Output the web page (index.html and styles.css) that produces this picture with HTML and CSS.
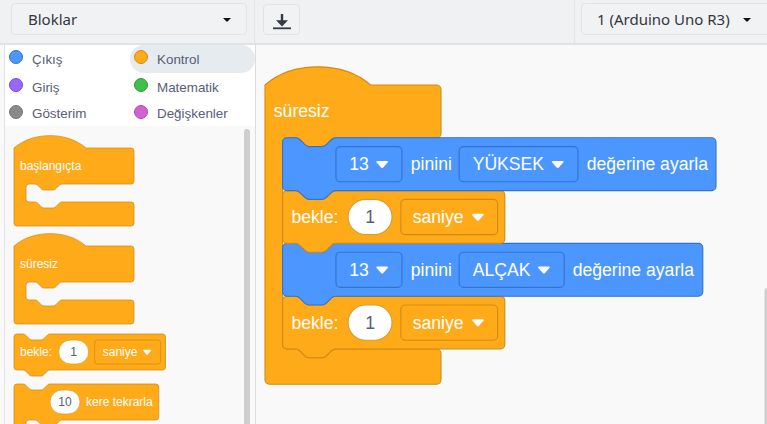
FILE: index.html
```html
<!DOCTYPE html>
<html lang="tr">
<head>
<meta charset="utf-8">
<title>Bloklar</title>
<link rel="stylesheet" href="styles.css">
</head>
<body>
<header class="topbar">
  <div class="tb-left">
    <div class="select"><span>Bloklar</span><span class="caret"></span></div>
  </div>
  <div class="tb-mid">
    <button class="icon-btn" type="button" aria-label="İndir">
      <svg width="18" height="16" viewBox="0 0 18 16"><rect x="7.8" y="0" width="2.4" height="7" fill="#343a46"/><polygon points="3,6.2 15,6.2 9,12.4" fill="#343a46"/><rect x="0" y="13.4" width="18" height="1.8" fill="#343a46"/></svg>
    </button>
  </div>
  <div class="tb-right">
    <div class="select board"><span>1 (Arduino Uno R3)</span><span class="caret"></span></div>
  </div>
</header>
<main class="main">
  <aside class="sidebar">
    <div class="side-inner">
      <ul class="cats">
        <li class="cat"><span class="dot d-blue"></span>Çıkış</li>
        <li class="cat active"><span class="dot d-orange"></span>Kontrol</li>
        <li class="cat"><span class="dot d-purple"></span>Giriş</li>
        <li class="cat"><span class="dot d-green"></span>Matematik</li>
        <li class="cat"><span class="dot d-gray"></span>Gösterim</li>
        <li class="cat"><span class="dot d-pink"></span>Değişkenler</li>
      </ul>
      <div class="flyout">
        <svg class="canvas" width="250" height="299" viewBox="5 125 250 299">
          <g transform="translate(14,147) scale(0.75)">
            <path class="ctl" d="M 0,0 c 25,-22 71,-22 96,0 H 156 a 4,4 0 0 1 4,4 V 44 a 4,4 0 0 1 -4,4 H 64 c -2,0 -3,1 -4,2 l -4,4 c -1,1 -2,2 -4,2 h -12 c -2,0 -3,-1 -4,-2 l -4,-4 c -1,-1 -2,-2 -4,-2 H 20 a 4,4 0 0 0 -4,4 V 68 a 4,4 0 0 0 4,4 H 28 c 2,0 3,1 4,2 l 4,4 c 1,1 2,2 4,2 h 12 c 2,0 3,-1 4,-2 l 4,-4 c 1,-1 2,-2 4,-2 H 156 a 4,4 0 0 1 4,4 V 100 a 4,4 0 0 1 -4,4 H 4 a 4,4 0 0 1 -4,-4 Z"/>
            <text class="bt" x="8" y="24">başlangıçta</text>
          </g>
          <g transform="translate(14,245) scale(0.75)">
            <path class="ctl" d="M 0,0 c 25,-22 71,-22 96,0 H 156 a 4,4 0 0 1 4,4 V 44 a 4,4 0 0 1 -4,4 H 64 c -2,0 -3,1 -4,2 l -4,4 c -1,1 -2,2 -4,2 h -12 c -2,0 -3,-1 -4,-2 l -4,-4 c -1,-1 -2,-2 -4,-2 H 20 a 4,4 0 0 0 -4,4 V 68 a 4,4 0 0 0 4,4 H 28 c 2,0 3,1 4,2 l 4,4 c 1,1 2,2 4,2 h 12 c 2,0 3,-1 4,-2 l 4,-4 c 1,-1 2,-2 4,-2 H 156 a 4,4 0 0 1 4,4 V 100 a 4,4 0 0 1 -4,4 H 4 a 4,4 0 0 1 -4,-4 Z"/>
            <text class="bt" x="8" y="24">süresiz</text>
          </g>
          <g transform="translate(14,333) scale(0.75)">
            <path class="ctl" d="M 0,4 a 4,4 0 0 1 4,-4 H 12 c 2,0 3,1 4,2 l 4,4 c 1,1 2,2 4,2 h 12 c 2,0 3,-1 4,-2 l 4,-4 c 1,-1 2,-2 4,-2 H 198 a 4,4 0 0 1 4,4 V 44 a 4,4 0 0 1 -4,4 H 48 c -2,0 -3,1 -4,2 l -4,4 c -1,1 -2,2 -4,2 h -12 c -2,0 -3,-1 -4,-2 l -4,-4 c -1,-1 -2,-2 -4,-2 H 4 a 4,4 0 0 1 -4,-4 Z"/>
            <text class="bt" x="8" y="24">bekle:</text>
            <rect class="num" x="59.5" y="8" width="40" height="32" rx="16"/>
            <text class="bt nt" x="79.5" y="24">1</text>
            <rect class="dd-o" x="107.5" y="8" width="88" height="32" rx="4"/>
            <text class="bt" x="118.3" y="24">saniye</text>
            <path class="arr" transform="translate(172,21)" d="M1.2,0 H9.8 Q11.6,0 10.5,1.4 L6.3,6.2 Q5.5,7.1 4.7,6.2 L0.5,1.4 Q-0.6,0 1.2,0 Z"/>
          </g>
          <g transform="translate(14,383) scale(0.75)">
            <path class="ctl" d="M 0,4 a 4,4 0 0 1 4,-4 H 12 c 2,0 3,1 4,2 l 4,4 c 1,1 2,2 4,2 h 12 c 2,0 3,-1 4,-2 l 4,-4 c 1,-1 2,-2 4,-2 H 189 a 4,4 0 0 1 4,4 V 44 a 4,4 0 0 1 -4,4 H 64 c -2,0 -3,1 -4,2 l -4,4 c -1,1 -2,2 -4,2 h -12 c -2,0 -3,-1 -4,-2 l -4,-4 c -1,-1 -2,-2 -4,-2 H 20 a 4,4 0 0 0 -4,4 V 68 a 4,4 0 0 0 4,4 H 28 c 2,0 3,1 4,2 l 4,4 c 1,1 2,2 4,2 h 12 c 2,0 3,-1 4,-2 l 4,-4 c 1,-1 2,-2 4,-2 H 189 a 4,4 0 0 1 4,4 V 100 a 4,4 0 0 1 -4,4 H 48 c -2,0 -3,1 -4,2 l -4,4 c -1,1 -2,2 -4,2 h -12 c -2,0 -3,-1 -4,-2 l -4,-4 c -1,-1 -2,-2 -4,-2 H 4 a 4,4 0 0 1 -4,-4 Z"/>
            <rect class="num" x="48" y="8" width="40" height="32" rx="16"/>
            <text class="bt nt" x="68" y="24">10</text>
            <text class="bt" x="96" y="24">kere tekrarla</text>
          </g>
          <rect class="sb" x="244" y="128" width="6" height="320" rx="3"/>
        </svg>
      </div>
    </div>
  </aside>
  <section class="ws">
    <svg class="canvas" width="511" height="379" viewBox="256 45 511 379">
      <g transform="translate(265,85) scale(1.1)">
        <path class="ctl" d="M 0,0 c 25,-22 71,-22 96,0 H 156 a 4,4 0 0 1 4,4 V 44 a 4,4 0 0 1 -4,4 H 64 c -2,0 -3,1 -4,2 l -4,4 c -1,1 -2,2 -4,2 h -12 c -2,0 -3,-1 -4,-2 l -4,-4 c -1,-1 -2,-2 -4,-2 H 20 a 4,4 0 0 0 -4,4 V 236 a 4,4 0 0 0 4,4 H 28 c 2,0 3,1 4,2 l 4,4 c 1,1 2,2 4,2 h 12 c 2,0 3,-1 4,-2 l 4,-4 c 1,-1 2,-2 4,-2 H 156 a 4,4 0 0 1 4,4 V 268 a 4,4 0 0 1 -4,4 H 4 a 4,4 0 0 1 -4,-4 Z"/>
        <text class="bt" x="8" y="24">süresiz</text>

        <g transform="translate(16,192)">
          <path class="ctl" d="M 0,4 a 4,4 0 0 1 4,-4 H 12 c 2,0 3,1 4,2 l 4,4 c 1,1 2,2 4,2 h 12 c 2,0 3,-1 4,-2 l 4,-4 c 1,-1 2,-2 4,-2 H 198 a 4,4 0 0 1 4,4 V 44 a 4,4 0 0 1 -4,4 H 48 c -2,0 -3,1 -4,2 l -4,4 c -1,1 -2,2 -4,2 h -12 c -2,0 -3,-1 -4,-2 l -4,-4 c -1,-1 -2,-2 -4,-2 H 4 a 4,4 0 0 1 -4,-4 Z"/>
          <text class="bt" x="8" y="24">bekle:</text>
          <rect class="num" x="59.5" y="8" width="40" height="32" rx="16"/>
          <text class="bt nt" x="79.5" y="24">1</text>
          <rect class="dd-o" x="107.5" y="8" width="88" height="32" rx="4"/>
          <text class="bt" x="118.3" y="24">saniye</text>
          <path class="arr" transform="translate(172,21)" d="M1.2,0 H9.8 Q11.6,0 10.5,1.4 L6.3,6.2 Q5.5,7.1 4.7,6.2 L0.5,1.4 Q-0.6,0 1.2,0 Z"/>
        </g>

        <g transform="translate(16,144)">
          <path class="blue" d="M 0,4 a 4,4 0 0 1 4,-4 H 12 c 2,0 3,1 4,2 l 4,4 c 1,1 2,2 4,2 h 12 c 2,0 3,-1 4,-2 l 4,-4 c 1,-1 2,-2 4,-2 H 378 a 4,4 0 0 1 4,4 V 44 a 4,4 0 0 1 -4,4 H 48 c -2,0 -3,1 -4,2 l -4,4 c -1,1 -2,2 -4,2 h -12 c -2,0 -3,-1 -4,-2 l -4,-4 c -1,-1 -2,-2 -4,-2 H 4 a 4,4 0 0 1 -4,-4 Z"/>
          <rect class="dd-b" x="48.5" y="8" width="60" height="32" rx="4"/>
          <text class="bt" x="60.5" y="24">13</text>
          <path class="arr" transform="translate(85,21)" d="M1.2,0 H9.8 Q11.6,0 10.5,1.4 L6.3,6.2 Q5.5,7.1 4.7,6.2 L0.5,1.4 Q-0.6,0 1.2,0 Z"/>
          <text class="bt" x="116.5" y="24">pinini</text>
          <rect class="dd-b" x="160.5" y="8" width="95.5" height="32" rx="4"/>
          <text class="bt" x="172.8" y="24">ALÇAK</text>
          <path class="arr" transform="translate(232,21)" d="M1.2,0 H9.8 Q11.6,0 10.5,1.4 L6.3,6.2 Q5.5,7.1 4.7,6.2 L0.5,1.4 Q-0.6,0 1.2,0 Z"/>
          <text class="bt" x="263.7" y="24">değerine ayarla</text>
        </g>

        <g transform="translate(16,96)">
          <path class="ctl" d="M 0,4 a 4,4 0 0 1 4,-4 H 12 c 2,0 3,1 4,2 l 4,4 c 1,1 2,2 4,2 h 12 c 2,0 3,-1 4,-2 l 4,-4 c 1,-1 2,-2 4,-2 H 198 a 4,4 0 0 1 4,4 V 44 a 4,4 0 0 1 -4,4 H 48 c -2,0 -3,1 -4,2 l -4,4 c -1,1 -2,2 -4,2 h -12 c -2,0 -3,-1 -4,-2 l -4,-4 c -1,-1 -2,-2 -4,-2 H 4 a 4,4 0 0 1 -4,-4 Z"/>
          <text class="bt" x="8" y="24">bekle:</text>
          <rect class="num" x="59.5" y="8" width="40" height="32" rx="16"/>
          <text class="bt nt" x="79.5" y="24">1</text>
          <rect class="dd-o" x="107.5" y="8" width="88" height="32" rx="4"/>
          <text class="bt" x="118.3" y="24">saniye</text>
          <path class="arr" transform="translate(172,21)" d="M1.2,0 H9.8 Q11.6,0 10.5,1.4 L6.3,6.2 Q5.5,7.1 4.7,6.2 L0.5,1.4 Q-0.6,0 1.2,0 Z"/>
        </g>

        <g transform="translate(16,48)">
          <path class="blue" d="M 0,4 a 4,4 0 0 1 4,-4 H 12 c 2,0 3,1 4,2 l 4,4 c 1,1 2,2 4,2 h 12 c 2,0 3,-1 4,-2 l 4,-4 c 1,-1 2,-2 4,-2 H 390 a 4,4 0 0 1 4,4 V 44 a 4,4 0 0 1 -4,4 H 48 c -2,0 -3,1 -4,2 l -4,4 c -1,1 -2,2 -4,2 h -12 c -2,0 -3,-1 -4,-2 l -4,-4 c -1,-1 -2,-2 -4,-2 H 4 a 4,4 0 0 1 -4,-4 Z"/>
          <rect class="dd-b" x="48.5" y="8" width="60" height="32" rx="4"/>
          <text class="bt" x="60.5" y="24">13</text>
          <path class="arr" transform="translate(85,21)" d="M1.2,0 H9.8 Q11.6,0 10.5,1.4 L6.3,6.2 Q5.5,7.1 4.7,6.2 L0.5,1.4 Q-0.6,0 1.2,0 Z"/>
          <text class="bt" x="116.5" y="24">pinini</text>
          <rect class="dd-b" x="160.5" y="8" width="108" height="32" rx="4"/>
          <text class="bt" x="172.8" y="24">YÜKSEK</text>
          <path class="arr" transform="translate(244.6,21)" d="M1.2,0 H9.8 Q11.6,0 10.5,1.4 L6.3,6.2 Q5.5,7.1 4.7,6.2 L0.5,1.4 Q-0.6,0 1.2,0 Z"/>
          <text class="bt" x="276.5" y="24">değerine ayarla</text>
        </g>
      </g>
      <rect class="sb" x="764.5" y="288" width="6" height="160" rx="3"/>
    </svg>
  </section>
</main>
</body>
</html>
```

FILE: styles.css
```css
html, body {
  margin: 0;
  padding: 0;
  width: 767px;
  height: 424px;
  overflow: hidden;
}
body {
  background: #f9f9f9;
  font-family: "Noto Sans", "Liberation Sans", sans-serif;
}

/* top bar */
.topbar {
  display: flex;
  height: 43px;
  background: #f0f1f3;
  border-bottom: 2px solid #e1e2e4;
}
.tb-left {
  width: 255px;
  flex: none;
  box-sizing: border-box;
  padding: 3px 7px 0 11px;
  border-right: 1px solid #e2e3e5;
}
.tb-mid {
  flex: 1;
  padding: 4px 0 0 8px;
  border-right: 1px solid #e2e3e5;
}
.tb-right {
  width: 192px;
  flex: none;
  box-sizing: border-box;
  padding: 3px 0 0 6px;
  overflow: hidden;
}
.select {
  height: 32px;
  box-sizing: border-box;
  border: 1px solid #e2e3e5;
  border-radius: 4px;
  background: #f1f2f4;
  display: flex;
  align-items: center;
  justify-content: space-between;
  padding: 0 15px 0 16px;
  font-size: 15px;
  color: #33373f;
}
.select.board {
  width: 190px;
  padding-left: 15px;
  padding-right: 19px;
}
.caret {
  width: 0;
  height: 0;
  border-left: 4px solid transparent;
  border-right: 4px solid transparent;
  border-top: 4px solid #111;
  margin-top: 2px;
}
.icon-btn {
  width: 37px;
  height: 31px;
  box-sizing: border-box;
  border: 1px solid #e2e3e5;
  border-radius: 4px;
  background: #f1f2f4;
  padding: 4px 0 0 0;
  display: flex;
  align-items: center;
  justify-content: center;
}

/* main area */
.main {
  display: flex;
  height: 379px;
}
.sidebar {
  width: 251px;
  flex: none;
  padding-left: 4px;
  border-right: 1px solid #dcdcdc;
  background: #f9f9f9;
}
.side-inner {
  height: 100%;
  border-left: 1px solid #e3e3e3;
  display: flex;
  flex-direction: column;
}
.cats {
  list-style: none;
  margin: 0;
  padding: 0;
  height: 81px;
  background: #fff;
  display: grid;
  grid-template-columns: 125px 125px;
  grid-template-rows: 28px 28px 25px;
  font-family: "Liberation Sans", Arial, sans-serif;
  font-size: 13.4px;
  color: #575e75;
}
.cat {
  display: flex;
  align-items: center;
  padding-left: 4px;
}
.cat.active {
  background: #e6ebf0;
  border-radius: 14px;
}
.dot {
  width: 14px;
  height: 14px;
  box-sizing: border-box;
  border-radius: 50%;
  margin-right: 9px;
  margin-top: -4px;
  border: 1px solid;
}
.d-blue { background: #4c97ff; border-color: #3373cc; }
.d-orange { background: #ffab19; border-color: #cf8b17; }
.d-purple { background: #9966ff; border-color: #774dcb; }
.d-green { background: #40bf4a; border-color: #389438; }
.d-gray { background: #8a8a8a; border-color: #777; }
.d-pink { background: #cf63cf; border-color: #bd42bd; }

.flyout {
  flex: 1;
  background: #f9f9f9;
  overflow: hidden;
}
.ws {
  flex: 1;
  background: #f9f9f9;
  overflow: hidden;
}
.canvas {
  display: block;
}

/* blocks */
.ctl { fill: #ffab19; stroke: #cf8b17; stroke-width: 1; }
.blue { fill: #4c97ff; stroke: #3373cc; stroke-width: 1; }
.dd-o { fill: #ffab19; stroke: #cf8b17; stroke-width: 1; }
.dd-b { fill: #4c97ff; stroke: #3373cc; stroke-width: 1; }
.num { fill: #fff; stroke: #d99a2e; stroke-width: 1; }
.arr { fill: #fff; }
.bt {
  font-family: "Liberation Sans", Arial, sans-serif;
  font-size: 16px;
  fill: #fff;
  dominant-baseline: central;
}
.bt.nt {
  fill: #575e75;
  text-anchor: middle;
}
.sb { fill: #cecece; }
```
